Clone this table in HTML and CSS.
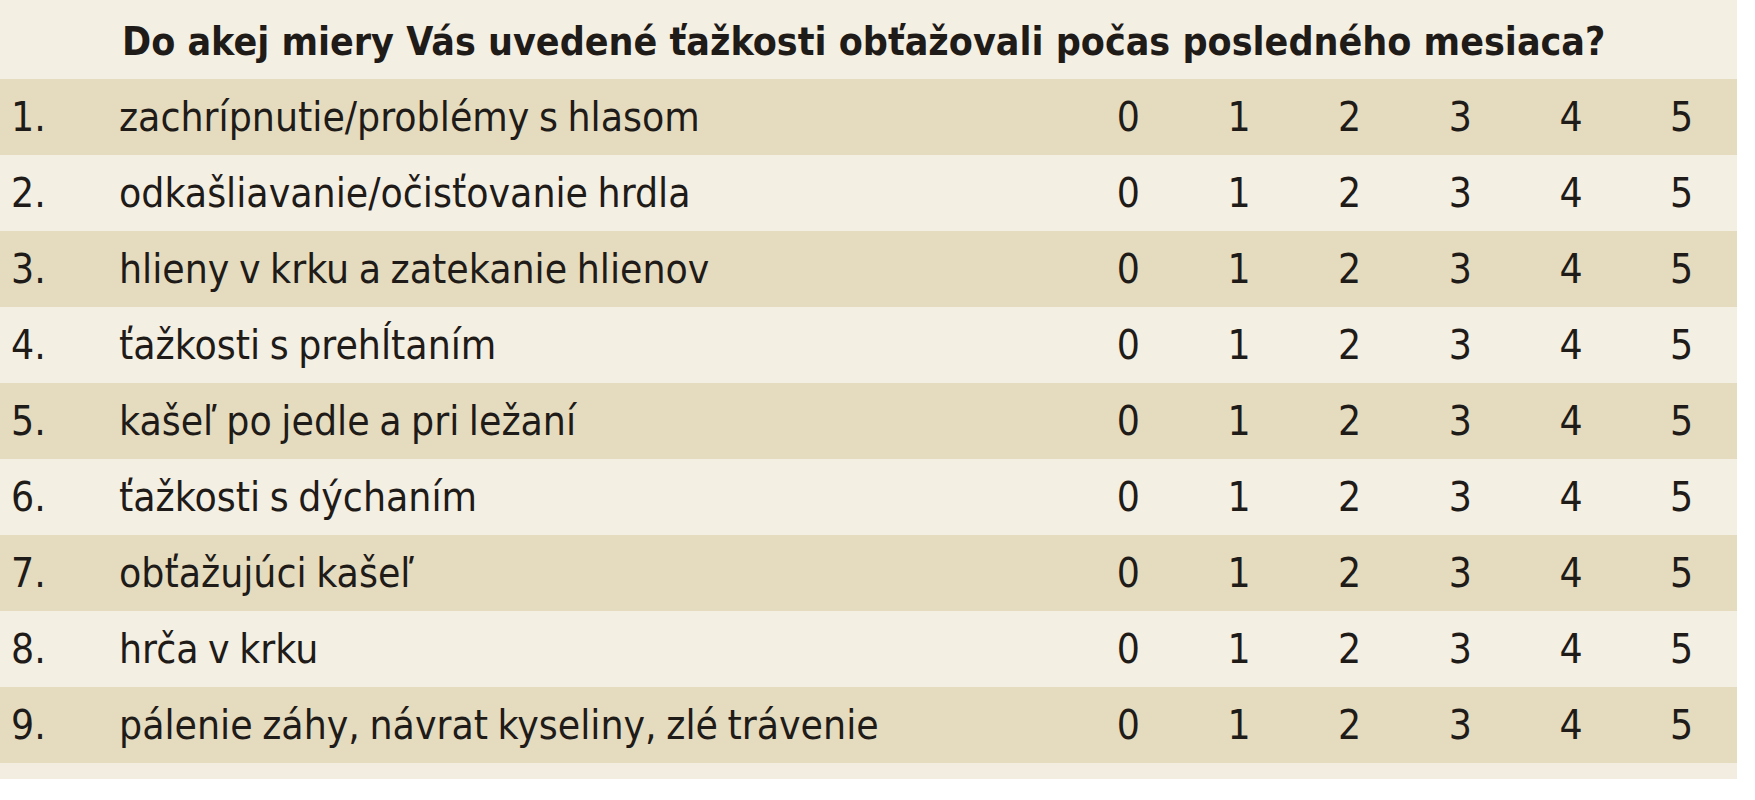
FILE: index.html
```html
<!DOCTYPE html>
<html lang="sk">
<head>
<meta charset="utf-8">
<title>Dotazník</title>
<link rel="stylesheet" href="styles.css">
</head>
<body>
<div class="sheet">
  <div class="head">
    <div class="head-title">Do akej miery Vás uvedené ťažkosti obťažovali počas posledného mesiaca?</div>
  </div>
  <div class="row dark"><span class="num">1.</span><span class="label">zachrípnutie/problémy s hlasom</span><span class="s">0</span><span class="s">1</span><span class="s">2</span><span class="s">3</span><span class="s">4</span><span class="s">5</span></div>
  <div class="row light"><span class="num">2.</span><span class="label">odkašliavanie/očisťovanie hrdla</span><span class="s">0</span><span class="s">1</span><span class="s">2</span><span class="s">3</span><span class="s">4</span><span class="s">5</span></div>
  <div class="row dark"><span class="num">3.</span><span class="label">hlieny v krku a zatekanie hlienov</span><span class="s">0</span><span class="s">1</span><span class="s">2</span><span class="s">3</span><span class="s">4</span><span class="s">5</span></div>
  <div class="row light"><span class="num">4.</span><span class="label">ťažkosti s prehĺtaním</span><span class="s">0</span><span class="s">1</span><span class="s">2</span><span class="s">3</span><span class="s">4</span><span class="s">5</span></div>
  <div class="row dark"><span class="num">5.</span><span class="label">kašeľ po jedle a pri ležaní</span><span class="s">0</span><span class="s">1</span><span class="s">2</span><span class="s">3</span><span class="s">4</span><span class="s">5</span></div>
  <div class="row light"><span class="num">6.</span><span class="label">ťažkosti s dýchaním</span><span class="s">0</span><span class="s">1</span><span class="s">2</span><span class="s">3</span><span class="s">4</span><span class="s">5</span></div>
  <div class="row dark"><span class="num">7.</span><span class="label">obťažujúci kašeľ</span><span class="s">0</span><span class="s">1</span><span class="s">2</span><span class="s">3</span><span class="s">4</span><span class="s">5</span></div>
  <div class="row light"><span class="num">8.</span><span class="label">hrča v krku</span><span class="s">0</span><span class="s">1</span><span class="s">2</span><span class="s">3</span><span class="s">4</span><span class="s">5</span></div>
  <div class="row dark"><span class="num">9.</span><span class="label">pálenie záhy, návrat kyseliny, zlé trávenie</span><span class="s">0</span><span class="s">1</span><span class="s">2</span><span class="s">3</span><span class="s">4</span><span class="s">5</span></div>
  <div class="foot"></div>
</div>
</body>
</html>
```

FILE: styles.css
```css
html, body {
  margin: 0;
  padding: 0;
  background: #ffffff;
}

.sheet {
  width: 1737px;
  background: #f4efe3;
  font-family: "Liberation Sans Narrow", "DejaVu Sans Condensed", "Liberation Sans", sans-serif;
  font-stretch: condensed;
  color: #1f1b18;
}

.head {
  height: 79px;
  display: flex;
  align-items: center;
  padding-left: 122px;
  background: #f4efe3;
}

.head-title {
  font-weight: bold;
  font-size: 39px;
  line-height: 1;
  padding-top: 4px;
}

.row {
  height: 76px;
  display: grid;
  grid-template-columns: 109px 964px repeat(6, 1fr);
  align-items: center;
  font-size: 40.5px;
  line-height: 1;
}

.row.dark {
  background: #e5dcc0;
}

.row.light {
  background: #f4efe3;
}

.num {
  padding-left: 11px;
}

.label {
  padding-left: 10px;
  white-space: nowrap;
  word-spacing: -2px;
}

.s {
  text-align: center;
}

.foot {
  height: 16px;
  background: #f3ede1;
}
```
